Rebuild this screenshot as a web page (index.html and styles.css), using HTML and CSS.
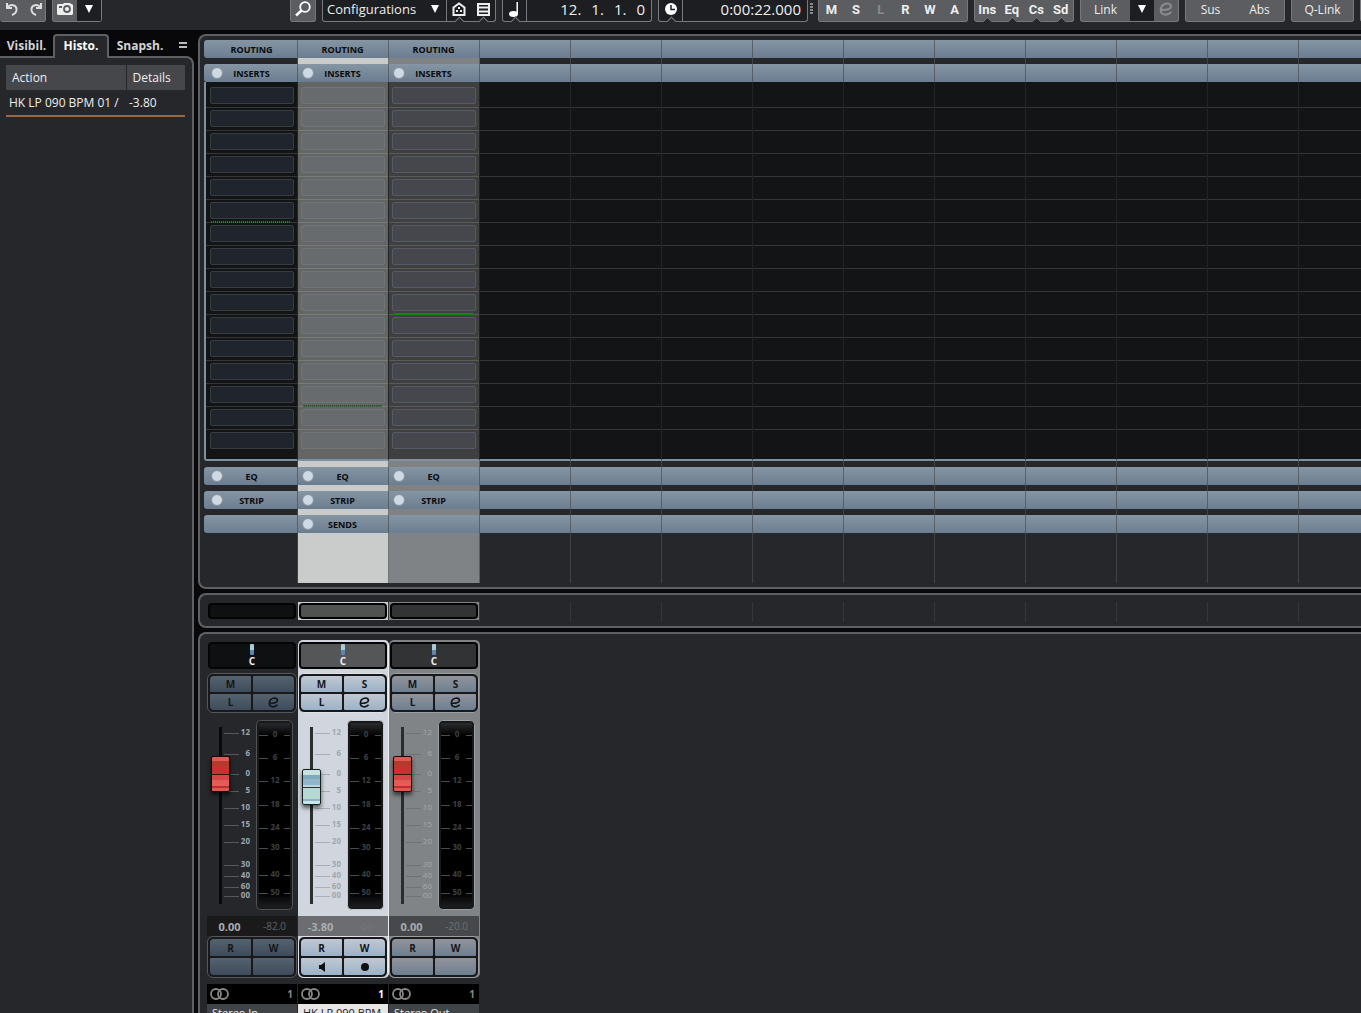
FILE: index.html
```html
<!DOCTYPE html>
<html lang="en">
<head>
    <meta charset="UTF-8">
    <title>MixConsole</title>
    <link rel="stylesheet" href="styles.css">
</head>
<body>
    <header class="toolbar">
        <div class="group first">
            <button class="tool" aria-label="Undo"><svg width="16" height="16" viewBox="0 0 16 16"><path d="M3 2v5h5M3.500 6.500C6 2.500 13 3.500 12.500 9c-.2 2.500-2 4-4.500 5" fill="none" stroke="#ddd" stroke-width="2"/></svg></button>
            <button class="tool" aria-label="Redo"><svg width="16" height="16" viewBox="0 0 16 16"><path d="M13 2v5H8M12.500 6.500C10 2.500 3 3.500 3.500 9c.2 2.500 2 4 4.500 5" fill="none" stroke="#ddd" stroke-width="2"/></svg></button>
        </div>
        <div class="group snapshot">
            <button class="tool" aria-label="Snapshot"><svg width="16" height="12" viewBox="0 0 16 12"><path d="M1 1h5l1-1h6l1 1h1l1 1v9l-1 1H1l-1-1V2z" fill="#eee"/><circle cx="10" cy="6" r="3" fill="#eee" stroke="#5b5d60" stroke-width="1.800"/><path d="M2 3h3v2H2z" fill="#5b5d60"/></svg></button>
            <button class="tool dark" aria-label="Snapshot menu"><svg width="8" height="8" viewBox="0 0 8 8"><path d="M0 0h8L4 8z" fill="#fff"/></svg></button>
        </div>
        <div class="group search">
            <button class="tool" aria-label="Search"><svg width="18" height="18" viewBox="0 0 18 18"><circle cx="11" cy="7" r="4.800" fill="none" stroke="#fff" stroke-width="1.800"/><path d="M7.500 10.500L2 15.500" stroke="#fff" stroke-width="2.500"/></svg></button>
        </div>
        <div class="group dark">
            <label class="config">
                <select aria-label="Configurations"><option>Configurations</option></select>
                <svg width="8" height="8" viewBox="0 0 8 8"><path d="M0 0h8L4 8z" fill="#fff"/></svg>
            </label>
            <button class="tool notch" aria-label="Racks"><svg width="14" height="14" viewBox="0 0 14 14"><path d="M1.500 13V5.500L7 1.500l5.500 4V13z" fill="none" stroke="#eee" stroke-width="2"/><path d="M6 5h2v2H6zM4 8h2v2H4zm4 0h2v2H8z" fill="#eee"/></svg></button>
            <button class="tool notch" aria-label="Channel types"><svg width="13" height="13" viewBox="0 0 13 13"><path d="M1 1h11v11H1z" fill="none" stroke="#eee" stroke-width="2"/><path d="M2 4.500h9M2 8.500h9" stroke="#eee" stroke-width="2"/></svg></button>
        </div>
        <div class="group dark">
            <button class="tool notch divided" aria-label="Bars and beats"><svg width="12" height="15" viewBox="0 0 12 15"><ellipse cx="4.500" cy="12" rx="4.500" ry="3" fill="#fff"/><path d="M8.200 0v12" stroke="#fff" stroke-width="1.500"/></svg></button>
            <output class="readout bars"><span>12.</span><span>1.</span><span>1.</span><span>0</span></output>
        </div>
        <div class="group dark clock">
            <button class="tool notch divided" aria-label="Seconds"><svg width="12" height="12" viewBox="0 0 12 12"><circle cx="6" cy="6" r="6" fill="#fff"/><path d="M6 2v4.500h4" fill="none" stroke="#1c1e21" stroke-width="1.500"/></svg></button>
            <output class="readout">0:00:22.000</output>
        </div>
        <svg class="grip" width="3" height="16" viewBox="0 0 3 16"><path d="M0 4h3M0 7h3M0 10h3M0 13h3" stroke="#aaa" stroke-width="1.500"/></svg>
        <div class="group bold">
            <button class="tool">M</button><button class="tool">S</button><button class="tool" disabled>L</button><button class="tool">R</button><button class="tool">W</button><button class="tool">A</button>
        </div>
        <div class="group bold">
            <button class="tool notch">Ins</button><button class="tool notch">Eq</button><button class="tool notch">Cs</button><button class="tool notch">Sd</button>
        </div>
        <div class="group">
            <button class="tool wide">Link</button>
            <button class="tool dark" aria-label="Link options"><svg width="8" height="8" viewBox="0 0 8 8"><path d="M0 0h8L4 8z" fill="#fff"/></svg></button>
            <button class="tool" aria-label="Link settings" disabled><svg width="14" height="14" viewBox="0 0 12 12"><path d="M1.500 6.500C6 7.500 10.500 6 10.300 3.500 9.500 0 2 .5 1.500 6.500 1.300 11.500 7.500 12 10.500 8.500" fill="none" stroke="currentColor" stroke-width="1.800"/></svg></button>
        </div>
        <div class="group">
            <button class="tool wide">Sus</button><button class="tool wide">Abs</button>
        </div>
        <div class="group">
            <button class="tool qlink">Q-Link</button>
        </div>
        <div class="group last"></div>
    </header>

    <div class="workspace">
        <aside class="sidebar">
            <nav class="tabs">
                <button class="tab">Visibil.</button>
                <button class="tab active">Histo.</button>
                <button class="tab">Snapsh.</button>
                <button class="tab menu" aria-label="Tab menu"><svg width="8" height="7" viewBox="0 0 8 7"><path d="M0 1h8M0 5h8" stroke="#bbb" stroke-width="2"/></svg></button>
            </nav>
            <div class="history">
                <table>
                    <thead><tr><th>Action</th><th>Details</th></tr></thead>
                    <tbody><tr><td>HK LP 090 BPM 01 /</td><td>-3.80</td></tr></tbody>
                </table>
            </div>
        </aside>
        <main class="console">
            <section class="panel racks" id="racks"></section>
            <section class="panel pictures" id="pictures"></section>
            <section class="panel faders" id="faders"></section>
        </main>
    </div>

    <script>
        const channels = [
            { cls: 'input', name: 'Stereo In', solo: '', level: 112, volume: '0.00', peak: '-82.0', split: 6 },
            { cls: 'selected', name: 'HK LP 090 BPM', solo: 'S', level: 99, volume: '-3.80', peak: '-oo', split: 14, sends: true, monitor: true },
            { cls: 'output', name: 'Stereo Out', solo: 'S', level: 112, volume: '0.00', peak: '-20.0', split: 10 }
        ]
        const slots = 16
        const spare_columns = 12
        const fader_marks = [[12, 12], [6, 33], [0, 53], [5, 70], [10, 87], [15, 104], [20, 121], [30, 144], [40, 155], [60, 166], ['00', 175]]
        const meter_marks = [[0, 14], [6, 37], [12, 60], [18, 84], [24, 107], [30, 127], [40, 154], [50, 172]]
        const edit_icon = '<svg width="11" height="11" viewBox="0 0 12 12"><path d="M1.500 6.500C6 7.500 10.500 6 10.300 3.500 9.500 0 2 .5 1.500 6.500 1.300 11.500 7.500 12 10.500 8.500" fill="none" stroke="currentColor" stroke-width="1.800"/></svg>'
        const speaker_icon = '<svg width="6" height="10" viewBox="0 0 6 10"><path d="M0 3h2l4-3v10L2 7H0z" fill="#111"/></svg>'
        const record_icon = '<svg width="8" height="8" viewBox="0 0 8 8"><circle cx="4" cy="4" r="4" fill="#111"/></svg>'

        let bar = (label, bypass) => `
            <div class="bar">
                ${bypass ? `<button class="bypass" aria-label="Bypass ${label}"></button>` : ''}
                <span class="title">${label}</span>
            </div>`

        let inserts = (ch) => {
            let rows = ''
            for (let i = 1; i <= slots; i++) {
                let split = ch && ch.split == i ? ` split${ch.cls == 'output' ? ' solid' : ''}` : ''
                rows += `<div class="row${split}">${ch ? `<button class="slot" aria-label="Insert ${i}"></button>` : ''}</div>`
            }
            return `<div class="inserts">${rows}</div>`
        }

        let rack = (ch) => `
            <div class="column ${ch ? ch.cls : 'spare'}">
                ${bar(ch ? 'ROUTING' : '', false)}
                <div class="opened">${bar(ch ? 'INSERTS' : '', ch)}${inserts(ch)}</div>
                ${bar(ch ? 'EQ' : '', ch)}
                ${bar(ch ? 'STRIP' : '', ch)}
                ${bar(ch && ch.sends ? 'SENDS' : '', ch && ch.sends)}
            </div>`

        let strip = (ch) => `
            <div class="strip ${ch.cls}">
                <div class="body">
                    <div class="pan"><i class="pan-line"></i>C</div>
                    <div class="pads">
                        <button>M</button><button aria-label="Solo">${ch.solo}</button>
                        <button>L</button><button aria-label="Edit channel">${edit_icon}</button>
                    </div>
                    <div class="levels">
                        <input class="fader" type="range" min="0" max="141" value="${ch.level}" aria-label="${ch.name} volume">
                        <svg class="scale" width="26" height="190" viewBox="0 0 26 190">
                            ${fader_marks.map(([n, y]) => `<path d="M0 ${y + 1}.5h15"/><text x="26" y="${y + 3}">${n}</text>`).join('')}
                        </svg>
                        <svg class="meter" width="37" height="190" viewBox="0 0 37 190">
                            <defs><linearGradient id="shade-${ch.cls}" x2="0" y2="1">
                                <stop offset="0" stop-color="#2a2b2d"/><stop offset=".07" stop-color="#000"/>
                                <stop offset=".92" stop-color="#000"/><stop offset="1" stop-color="#1c1d1f"/>
                            </linearGradient></defs>
                            <rect class="edge" x=".5" y=".5" width="36" height="189" rx="4"/>
                            <rect x="3" y="3" width="31" height="184" fill="url(#shade-${ch.cls})"/>
                            ${meter_marks.map(([n, y]) => `<path d="M3 ${y + 1}.5h9M28 ${y + 1}.5h6"/><text x="19" y="${y + 3}">${n}</text>`).join('')}
                        </svg>
                    </div>
                    <div class="values"><span class="volume">${ch.volume}</span><span class="peak">${ch.peak}</span></div>
                    <div class="pads automation">
                        <button>R</button><button>W</button>
                        <button aria-label="Monitor">${ch.monitor ? speaker_icon : ''}</button><button aria-label="Record">${ch.monitor ? record_icon : ''}</button>
                    </div>
                </div>
                <div class="number">
                    <svg width="20" height="12" viewBox="0 0 20 12"><g fill="none" stroke="#888" stroke-width="1.800"><circle cx="6" cy="6" r="5"/><circle cx="13" cy="6" r="5"/></g></svg>
                    <span>1</span>
                </div>
                <div class="name">${ch.name}</div>
            </div>`

        let spare = Array(spare_columns).fill(null)
        let columns = channels.concat(spare)
        document.getElementById('racks').innerHTML = columns.map(rack).join('')
        document.getElementById('pictures').innerHTML = columns.map(ch => `<div class="cell ${ch ? ch.cls : ''}">${ch ? '<div class="frame"><div class="picture"></div></div>' : ''}</div>`).join('')
        document.getElementById('faders').innerHTML = channels.map(strip).join('')
    </script>
</body>
</html>
```

FILE: styles.css
```css
* {
    box-sizing: border-box;
}
html,
body {
    height: 100%;
}
body {
    display: flex;
    flex-direction: column;
    overflow: hidden;
    margin: 0;
    background: #08080a;
    color: #eee;
    font-family: "Open Sans", "Noto Sans", sans-serif;
    font-size: 12px;
}
button,
select,
input {
    margin: 0;
    padding: 0;
    border: none;
    border-radius: 0;
    background: none;
    color: inherit;
    font: inherit;
}
svg {
    display: block;
    flex: none;
}

/* Toolbar */
.toolbar {
    display: flex;
    flex: none;
    gap: 6px;
    height: 30px;
    overflow: hidden;
    background: #26272b;
}
.group {
    display: flex;
    flex: none;
    height: 22px;
    border: 1px solid #77797c;
    border-top: none;
    border-radius: 0 0 3px 3px;
    background: #5b5d60;
}
.group.dark,
.tool.dark {
    background: #1c1e21;
}
.group.first {
    width: 46px;
    border-left: none;
}
.group.search {
    margin-left: 182px;
}
.group.last {
    width: 40px;
}
.tool {
    position: relative;
    display: flex;
    flex: none;
    align-items: center;
    justify-content: center;
    width: 24px;
    padding-bottom: 3px;
}
.snapshot .tool,
.search .tool {
    width: 24px;
}
.bold {
    width: 150px;
}
.bold + .bold {
    width: 100px;
}
.bold .tool {
    flex: 1;
    width: auto;
    font: bold 13px Roboto, sans-serif;
}
.tool.wide {
    width: 49px;
}
.tool.qlink {
    width: 61px;
}
.tool:disabled {
    color: #898b8d;
}
.tool.divided {
    border-right: 1px solid #77797c;
}
/* small marker that cuts into the lower border */
.notch::after {
    content: "";
    position: absolute;
    bottom: -4px;
    left: 50%;
    width: 6px;
    height: 6px;
    margin-left: -3px;
    border: 1px solid #77797c;
    border-right: none;
    border-bottom: none;
    background: #26272b;
    transform: rotate(45deg);
}
.config {
    display: flex;
    align-items: center;
    width: 124px;
    padding: 0 7px 3px 4px;
    border-right: 1px solid #77797c;
}
.config select {
    flex: 1;
    min-width: 0;
    appearance: none;
    outline: none;
    font-size: 13px;
}
.readout {
    display: flex;
    align-items: center;
    justify-content: flex-end;
    width: 124px;
    padding: 0 6px 3px 0;
    font-size: 15px;
}
.bars {
    gap: 10px;
}
.grip {
    margin: 0 -1px 0 -4px;
}

/* Sidebar */
.workspace {
    display: flex;
    flex: 1;
    gap: 4px;
    min-height: 0;
    padding-top: 4px;
}
.sidebar {
    display: flex;
    flex: none;
    flex-direction: column;
    width: 194px;
}
.tabs {
    display: flex;
    height: 22px;
}
.tab {
    position: relative;
    width: 53px;
    color: #d4d4d4;
    font-weight: bold;
}
.tab.active {
    z-index: 1;
    width: 56px;
    margin-bottom: -2px;
    padding-bottom: 4px;
    border: 2px solid #5f6064;
    border-bottom: none;
    border-radius: 4px 4px 0 0;
    background: #26272b;
    color: #fff;
}
.tab:nth-child(3) {
    width: 62px;
}
.tab.menu {
    display: flex;
    align-items: center;
    justify-content: center;
    width: 23px;
}
.history {
    flex: 1;
    padding: 7px 7px 0 6px;
    border: 2px solid #5f6064;
    border-width: 2px 2px 0 0;
    border-radius: 0 8px 0 0;
    background: #26272b;
}
.history table {
    width: 100%;
    border-collapse: collapse;
    table-layout: fixed;
}
.history th {
    height: 25px;
    padding: 0 6px;
    background: #46474a;
    font-weight: normal;
    text-align: left;
}
.history th:first-child {
    width: 120px;
    border-right: 1px solid #26272b;
}
.history td {
    height: 26px;
    padding: 0 3px;
    border-bottom: 2px solid #946943;
    white-space: nowrap;
}

/* Console panels */
.console {
    display: flex;
    flex: 1;
    flex-direction: column;
    gap: 4px;
    min-width: 0;
}
.panel {
    display: flex;
    flex: none;
    overflow: hidden;
    border: 2px solid #5f6064;
    border-right: none;
    border-radius: 8px 0 0 8px;
    background: #26272b;
}

/* Racks */
.racks {
    padding: 4px 0 4px 4px;
}
.column {
    position: relative;
    display: flex;
    flex: none;
    flex-direction: column;
    gap: 6px;
    width: 91px;
    padding-bottom: 50px;
}
.column.input {
    width: 94px;
}
.column.selected {
    background: #cacccb;
}
.column.output {
    background: #808385;
}
.column::after {
    content: "";
    position: absolute;
    top: 0;
    right: 0;
    bottom: 0;
    width: 1px;
    background: rgba(75, 78, 82, 0.7);
}
.bar {
    display: grid;
    grid-template-columns: 12px 1fr 12px;
    align-items: center;
    height: 18px;
    padding: 0 6px 0 4px;
    background: linear-gradient(#8595a3, #6b7d90);
    color: #08090b;
    font-size: 9px;
    font-weight: bold;
}
.input .bar {
    padding-left: 7px;
    border-radius: 3px 0 0 3px;
}
.title {
    grid-column: 2;
    text-align: center;
}
.bypass {
    width: 12px;
    height: 12px;
    border: 1px solid #8c8f93;
    border-radius: 50%;
    background: #cdd9e5;
}
.inserts {
    position: relative;
    z-index: 1;
    padding: 3px 0 6px;
    border-right: 1px solid #232426;
    border-bottom: 2px solid #7f919f;
    background: #131416;
}
.input .inserts {
    border-left: 2px solid #7f919f;
    border-radius: 0 0 0 3px;
}
.selected .inserts {
    background: #646666;
}
.output .inserts {
    background: #3f3f40;
}
.row {
    position: relative;
    height: 23px;
    padding: 2px 3px 0;
    border-bottom: 1px solid rgba(255, 255, 255, 0.14);
}
.row:last-child {
    border-bottom: none;
}
.input .row {
    padding-left: 4px;
}
.slot {
    display: block;
    width: 100%;
    height: 17px;
    border: 1px solid #363d42;
    border-radius: 2px;
    background: #20252d;
}
.selected .slot {
    border-color: #70757a;
    background: #676b6d;
}
.output .slot {
    border-color: #545b66;
    background: #45474c;
}
/* pre/post fader divider */
.split::after {
    content: "";
    position: absolute;
    right: 6px;
    bottom: -1px;
    left: 5px;
    height: 2px;
    background: repeating-linear-gradient(90deg, #0c960c 0 1px, rgba(0, 60, 0, 0.5) 1px 2px);
}
.split.solid::after {
    background: #0c8a0c;
}

/* Pictures */
.pictures {
    padding: 7px 0 4px 7px;
}
.cell {
    flex: none;
    width: 91px;
    height: 20px;
    border-right: 1px solid #36373a;
}
.cell.input {
    border-color: transparent;
}
.frame {
    height: 18px;
    padding: 1px;
}
.picture {
    height: 16px;
    border: 2px solid #030304;
    border-radius: 4px;
    background: #0f1012;
}
.selected .frame {
    background: #cacccb;
}
.selected .picture {
    background: #505151;
}
.output .frame {
    background: #808385;
}
.output .picture {
    background: #323335;
}

/* Channel strips */
.faders {
    flex: 1;
    min-height: 0;
    padding: 6px 0 0 7px;
    border-bottom: none;
    border-radius: 8px 0 0 0;
}
.strip {
    flex: none;
    width: 91px;
}
.body {
    border-radius: 5px;
    padding-top: 2px;
    border-right: 1px solid transparent;
}
.selected .body {
    border-color: #eceef0;
    background: #d1d5dd;
}
.output .body {
    background: #808486;
}
.pan {
    display: flex;
    flex-direction: column;
    align-items: center;
    height: 27px;
    margin: 0 1px;
    border: 2px solid #050506;
    border-radius: 4px;
    background: #0f1012;
    font-size: 10px;
    font-weight: bold;
    line-height: 12px;
}
.selected .pan {
    background: #555657;
}
.output .pan {
    background: #323335;
}
.pan-line {
    flex: none;
    width: 4px;
    height: 11px;
    border-radius: 1px;
    background: linear-gradient(#a9cbd8 50%, #5b86b5 50%);
}
.pads {
    display: grid;
    grid-template-columns: 1fr 1fr;
    gap: 2px;
    margin-top: 4px;
    padding: 2px;
    border: 1px solid #55575a;
    border-radius: 6px;
    background: #17191c;
}
.pads button {
    display: flex;
    align-items: center;
    justify-content: center;
    height: 16px;
    border-radius: 1px;
    background: linear-gradient(#55636e, #3d4b5c);
    color: #14161a;
    font-size: 10px;
    font-weight: bold;
}
.pads button:first-child {
    border-top-left-radius: 4px;
}
.pads button:nth-child(2) {
    border-top-right-radius: 4px;
}
.pads button:nth-child(3) {
    border-bottom-left-radius: 4px;
}
.pads button:last-child {
    border-bottom-right-radius: 4px;
}
.selected .pads {
    border-color: #dfe3e8;
}
.selected .pads button {
    background: linear-gradient(#c0c8d3, #9cb2c6);
}
.output .pads {
    border-color: #9da0a2;
}
.output .pads button {
    background: linear-gradient(#92949c, #6d7f91);
}
.pads.automation {
    margin-top: 0;
}
.automation button {
    height: 17px;
}

.levels {
    display: flex;
    height: 203px;
    padding: 7px 0 0 4px;
}
.fader {
    position: relative;
    z-index: 1;
    flex: none;
    width: 19px;
    height: 177px;
    margin-top: 7px;
    appearance: none;
    writing-mode: vertical-lr;
    direction: rtl;
    background: linear-gradient(#08090a, #08090a) center / 3px 100% no-repeat;
}
.selected .fader,
.output .fader {
    background-image: linear-gradient(#2b2c2e, #2b2c2e);
}
.fader::-webkit-slider-thumb {
    appearance: none;
    width: 19px;
    height: 36px;
    border: 1px solid #1a0505;
    border-radius: 2px;
    background: linear-gradient(#e05a55 0 4px, #b43a2a 4px 9px, #c93030 9px 17px, #3a0c0c 17px 18px, #d84545 18px 23px, #e45c58 23px 29px, #bd2f2a 29px 31px, #e35753 31px);
    box-shadow: 0 3px 4px rgba(0, 0, 0, 0.6);
}
.selected .fader::-webkit-slider-thumb {
    border-color: #14201f;
    background: linear-gradient(#c5e3e3 0 5px, #7fa9bd 5px 9px, #92b5ca 9px 15px, #b8d6dc 15px 17px, #333 17px 18px, #b5d8d3 18px 29px, #8fb0c8 29px 31px, #c5e7e5 31px);
}
.scale {
    margin-left: -6px;
}
.scale path {
    stroke: #55575a;
}
.scale text {
    fill: #a0a6ac;
    font-size: 8px;
    font-weight: bold;
    text-anchor: end;
}
.selected .scale path {
    stroke: #a9adb4;
}
.selected .scale text {
    fill: #a2a7af;
}
.output .scale path {
    stroke: #6f7376;
}
.output .scale text {
    fill: #a6a9ab;
    font-weight: normal;
}
.meter {
    margin-left: 6px;
}
.meter .edge {
    fill: #17181a;
    stroke: #505255;
}
.selected .edge {
    stroke: #c5c9d0;
}
.output .edge {
    stroke: #9da0a2;
}
.meter path {
    stroke: #4a4c4e;
}
.meter text {
    fill: #3f4144;
    font-size: 8px;
    font-weight: bold;
    text-anchor: middle;
}
.values {
    display: grid;
    grid-template-columns: 1fr 1fr;
    align-items: center;
    height: 20px;
    background: #1a1a1b;
    font-size: 11px;
    text-align: center;
}
.volume {
    color: #a9adb1;
    font-weight: bold;
}
.peak {
    color: #5d6266;
    font-size: 10px;
}
.selected .values {
    background: #6b6d70;
}
.selected .peak {
    color: #747679;
}
.output .values {
    background: #46484b;
}
.output .peak {
    color: #6b7176;
}
.number {
    display: flex;
    align-items: center;
    justify-content: space-between;
    height: 20px;
    margin: 6px 1px 0 0;
    padding: 0 4px 0 3px;
    background: #000;
    color: #85888b;
    font-size: 10px;
    font-weight: bold;
}
.selected .number {
    color: #fff;
}
.name {
    height: 22px;
    margin-right: 1px;
    padding: 0 5px;
    overflow: hidden;
    background: #404447;
    color: #eee;
    font-size: 11px;
    line-height: 18px;
    white-space: nowrap;
}
.selected .name {
    background: #e8e7e5;
    color: #222;
}
```
